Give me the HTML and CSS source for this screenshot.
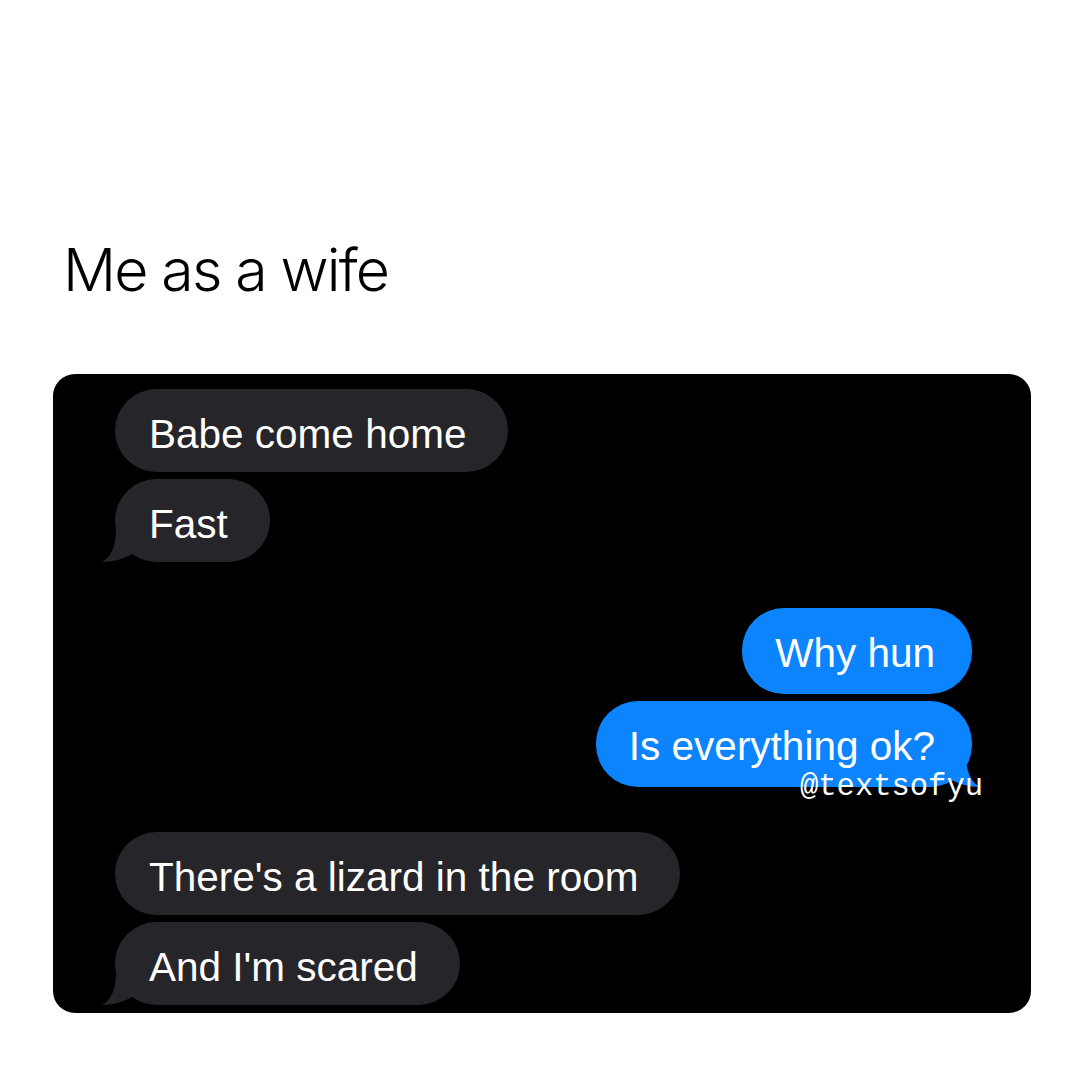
FILE: index.html
```html
<!DOCTYPE html>
<html lang="en">
<head>
<meta charset="utf-8">
<title>Me as a wife</title>
<link rel="stylesheet" href="styles.css">
</head>
<body>
<div class="page">
  <h1 class="caption">Me as a wife</h1>
  <div class="chat">
    <div class="group in">
      <div class="bubble">Babe come home</div>
      <div class="bubble has-tail">Fast<svg class="tail" viewBox="0 0 34 34" aria-hidden="true"><path d="M14 2 C14 20 8 30 0 34 C10 34 22 31 30 26 L34 20 L34 2 Z"/></svg></div>
    </div>
    <div class="group out">
      <div class="bubble">Why hun</div>
      <div class="bubble has-tail">Is everything ok?<svg class="tail" viewBox="0 0 34 34" aria-hidden="true"><path d="M14 2 C14 20 8 30 0 34 C10 34 22 31 30 26 L34 20 L34 2 Z"/></svg></div>
    </div>
    <div class="group in">
      <div class="bubble">There's a lizard in the room</div>
      <div class="bubble has-tail">And I'm scared<svg class="tail" viewBox="0 0 34 34" aria-hidden="true"><path d="M14 2 C14 20 8 30 0 34 C10 34 22 31 30 26 L34 20 L34 2 Z"/></svg></div>
    </div>
    <span class="watermark">@textsofyu</span>
  </div>
</div>
</body>
</html>
```
FILE: styles.css
```css
html, body {
  margin: 0;
  padding: 0;
  background: #ffffff;
}

.page {
  width: 1080px;
  height: 1080px;
  box-sizing: border-box;
  padding: 234px 49px 0 53px;
  display: flex;
  flex-direction: column;
}

.caption {
  margin: 0 0 68px 10px;
  font-family: "Inter", "Liberation Sans", Arial, sans-serif;
  font-weight: 300;
  font-size: 59px;
  line-height: 72px;
  letter-spacing: -1.85px;
  color: #000000;
}

.chat {
  position: relative;
  background: #000000;
  border-radius: 22px;
  height: 639px;
  box-sizing: border-box;
  padding: 15px 59px 10px 62px;
  display: flex;
  flex-direction: column;
  gap: 46px;
  font-family: "Liberation Sans", Arial, sans-serif;
}

.group {
  display: flex;
  flex-direction: column;
  gap: 7px;
}

.group.in {
  align-items: flex-start;
}

.group.out {
  align-items: flex-end;
}

.group.out + .group.in {
  margin-top: -1px;
}

.bubble {
  position: relative;
  font-size: 40.5px;
  line-height: 48px;
  color: #ffffff;
  border-radius: 42px;
  white-space: nowrap;
}

.in .bubble {
  background: #262529;
  padding: 21px 42px 14px 34px;
}

.out .bubble {
  background: #0b84fe;
  padding: 21px 37px 17px 33px;
}

.tail {
  position: absolute;
  bottom: 0;
  width: 34px;
  height: 34px;
}

.in .tail {
  left: -13px;
  fill: #262529;
}

.out .tail {
  right: -8px;
  fill: #0b84fe;
  transform: scaleX(-1);
}

.watermark {
  position: absolute;
  left: 747px;
  top: 398px;
  font-family: "Liberation Mono", "Courier New", monospace;
  font-size: 30.5px;
  line-height: 1;
  color: #ffffff;
  letter-spacing: 0;
}
```
